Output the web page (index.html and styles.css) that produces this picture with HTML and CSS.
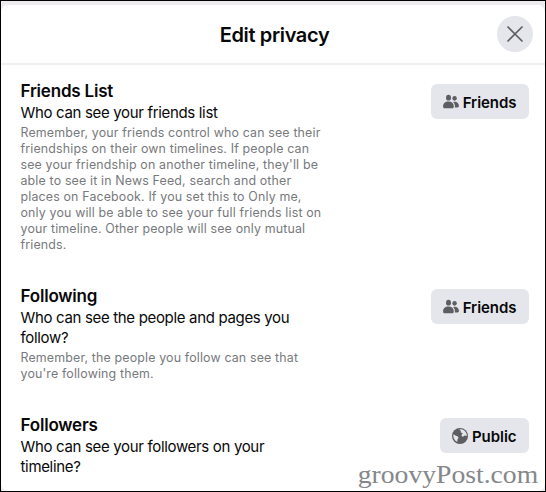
FILE: index.html
```html
<!DOCTYPE html>
<html lang="en">
<head>
    <meta charset="UTF-8">
    <meta name="viewport" content="width=device-width, initial-scale=1.0">
    <title>Edit privacy</title>
    <link rel="stylesheet" href="styles.css">
</head>
<body>
    <svg width="0" height="0" class="sprite">
        <symbol id="icon-friends" viewBox="0 0 16 16">
            <ellipse cx="5.5" cy="3.7" rx="2.5" ry="2.9"/>
            <ellipse cx="11.6" cy="4.3" rx="2.2" ry="2.4"/>
            <path d="M0.1 12.400C0.1 9.400 2.200 7.600 5.500 7.600s5.300 1.800 5.300 4.800c0 1.300-.7 1.900-1.700 1.900H1.800c-1 0-1.700-.6-1.700-1.900z"/>
            <path d="M10.200 7.900c3.400-.9 5.700 1.100 5.700 3.900 0 1.200-.5 1.700-1.400 1.700h-2.600c.2-2.200-.3-4.200-1.700-5.600z"/>
        </symbol>
        <symbol id="icon-globe" viewBox="0 0 16 16">
            <circle cx="8" cy="8" r="8"/>
            <path fill="#e4e6eb" d="M7.500 1.300c3-.5 5.800 1.200 6.900 4 .3.900.4 1.700.3 2.600-.8.300-1.200-.6-2-.5-.9.100-.9 1.200-1.900 1.200-1 .1-1.400-.8-1.200-1.600.2-.9 1.100-1 1-1.700-.2-.7-1.100-.3-1.600-.9-.4-.5.100-1-.2-1.500-.4-.6-1.300-.8-1.300-1.600zM1.300 6.600c1 0 1.600.7 2.500 1.100 1 .4 2.500.6 2.600 1.700.1 1-.8 1.400-1 2.300-.1.800.3 1.700-.3 2.100C2.700 12.900 1 10 1.300 6.600z"/>
        </symbol>
    </svg>

    <div class="dialog">
        <div class="dialog-header">
            <h2>Edit privacy</h2>
            <button class="close-button" aria-label="Close">
                <svg width="16" height="16" viewBox="0 0 16 16">
                    <path d="M1 1l14 14M15 1L1 15"/>
                </svg>
            </button>
        </div>

        <div class="setting">
            <div class="setting-text">
                <h3>Friends List</h3>
                <p class="question">Who can see your friends list</p>
                <p class="note">Remember, your friends control who can see their<br>friendships on their own timelines. If people can<br>see your friendship on another timeline, they'll be<br>able to see it in News Feed, search and other<br>places on Facebook. If you set this to Only me,<br>only you will be able to see your full friends list on<br>your timeline. Other people will see only mutual<br>friends.</p>
            </div>
            <button class="audience">
                <svg class="icon"><use href="#icon-friends"/></svg>
                <span>Friends</span>
            </button>
        </div>

        <div class="setting">
            <div class="setting-text">
                <h3>Following</h3>
                <p class="question">Who can see the people and pages you<br>follow?</p>
                <p class="note">Remember, the people you follow can see that<br>you're following them.</p>
            </div>
            <button class="audience">
                <svg class="icon"><use href="#icon-friends"/></svg>
                <span>Friends</span>
            </button>
        </div>

        <div class="setting">
            <div class="setting-text">
                <h3>Followers</h3>
                <p class="question">Who can see your followers on your<br>timeline?</p>
            </div>
            <button class="audience">
                <svg class="icon"><use href="#icon-globe"/></svg>
                <span>Public</span>
            </button>
        </div>
    </div>
    <div class="watermark">groovyPost.com</div>
</body>
</html>
```

FILE: styles.css
```css
* {
    box-sizing: border-box;
}

body {
    margin: 0;
    width: 546px;
    height: 492px;
    padding-top: 4px;
    border: 1px solid #000;
    background-color: #eeebef;
    font-family: Inter, "Liberation Sans", sans-serif;
    color: #080809;
    overflow: hidden;
    position: relative;
}

h2, h3, p {
    margin: 0;
}

button {
    border: none;
    padding: 0;
    font-family: inherit;
    color: inherit;
    background-color: #e4e6eb;
    cursor: pointer;
}

.sprite {
    position: absolute;
}

.dialog {
    height: 486px;
    background-color: #fff;
    border-radius: 7px;
}

.dialog-header {
    display: grid;
    grid-template-columns: 36px 1fr 36px;
    align-items: center;
    height: 60px;
    padding: 0 12.5px;
    border-bottom: 2px solid #f0f0f1;
    margin-bottom: 15px;
}

.dialog-header h2 {
    grid-column: 2;
    padding: 2px 0 0 3px;
    text-align: center;
    font-size: 20px;
    line-height: 24px;
    font-weight: 600;
    letter-spacing: -0.35px;
}

.close-button {
    display: flex;
    align-items: center;
    justify-content: center;
    width: 36px;
    height: 36px;
    border-radius: 50%;
}

.close-button path {
    stroke: #5c5e62;
    stroke-width: 1.7;
    stroke-linecap: round;
}

.setting {
    display: flex;
    justify-content: space-between;
    align-items: flex-start;
    padding: 0 16.5px 0 19.5px;
    margin-bottom: 32px;
}

.setting-text {
    white-space: nowrap;
}

.setting h3 {
    font-size: 17px;
    line-height: 22px;
    font-weight: 600;
    letter-spacing: -0.2px;
}

.question {
    padding-top: 1px;
    font-size: 15px;
    line-height: 20px;
    letter-spacing: -0.33px;
}

.note {
    padding-top: 2px;
    font-size: 12.4px;
    line-height: 16px;
    letter-spacing: 0.16px;
    color: #77797d;
}

.audience {
    display: flex;
    align-items: center;
    gap: 4px;
    height: 35px;
    margin-top: 4px;
    padding: 1px 12px 0;
    border-radius: 6px;
    font-size: 15px;
    font-weight: 600;
    letter-spacing: -0.05px;
}

.icon {
    width: 16px;
    height: 16px;
    fill: #5c5e62;
}

.watermark {
    position: absolute;
    right: 7px;
    bottom: 2px;
    font-family: "Liberation Serif", serif;
    font-size: 25px;
    line-height: 28px;
    color: #85878a;
    transform: scaleX(1.106);
    transform-origin: right;
}
```
